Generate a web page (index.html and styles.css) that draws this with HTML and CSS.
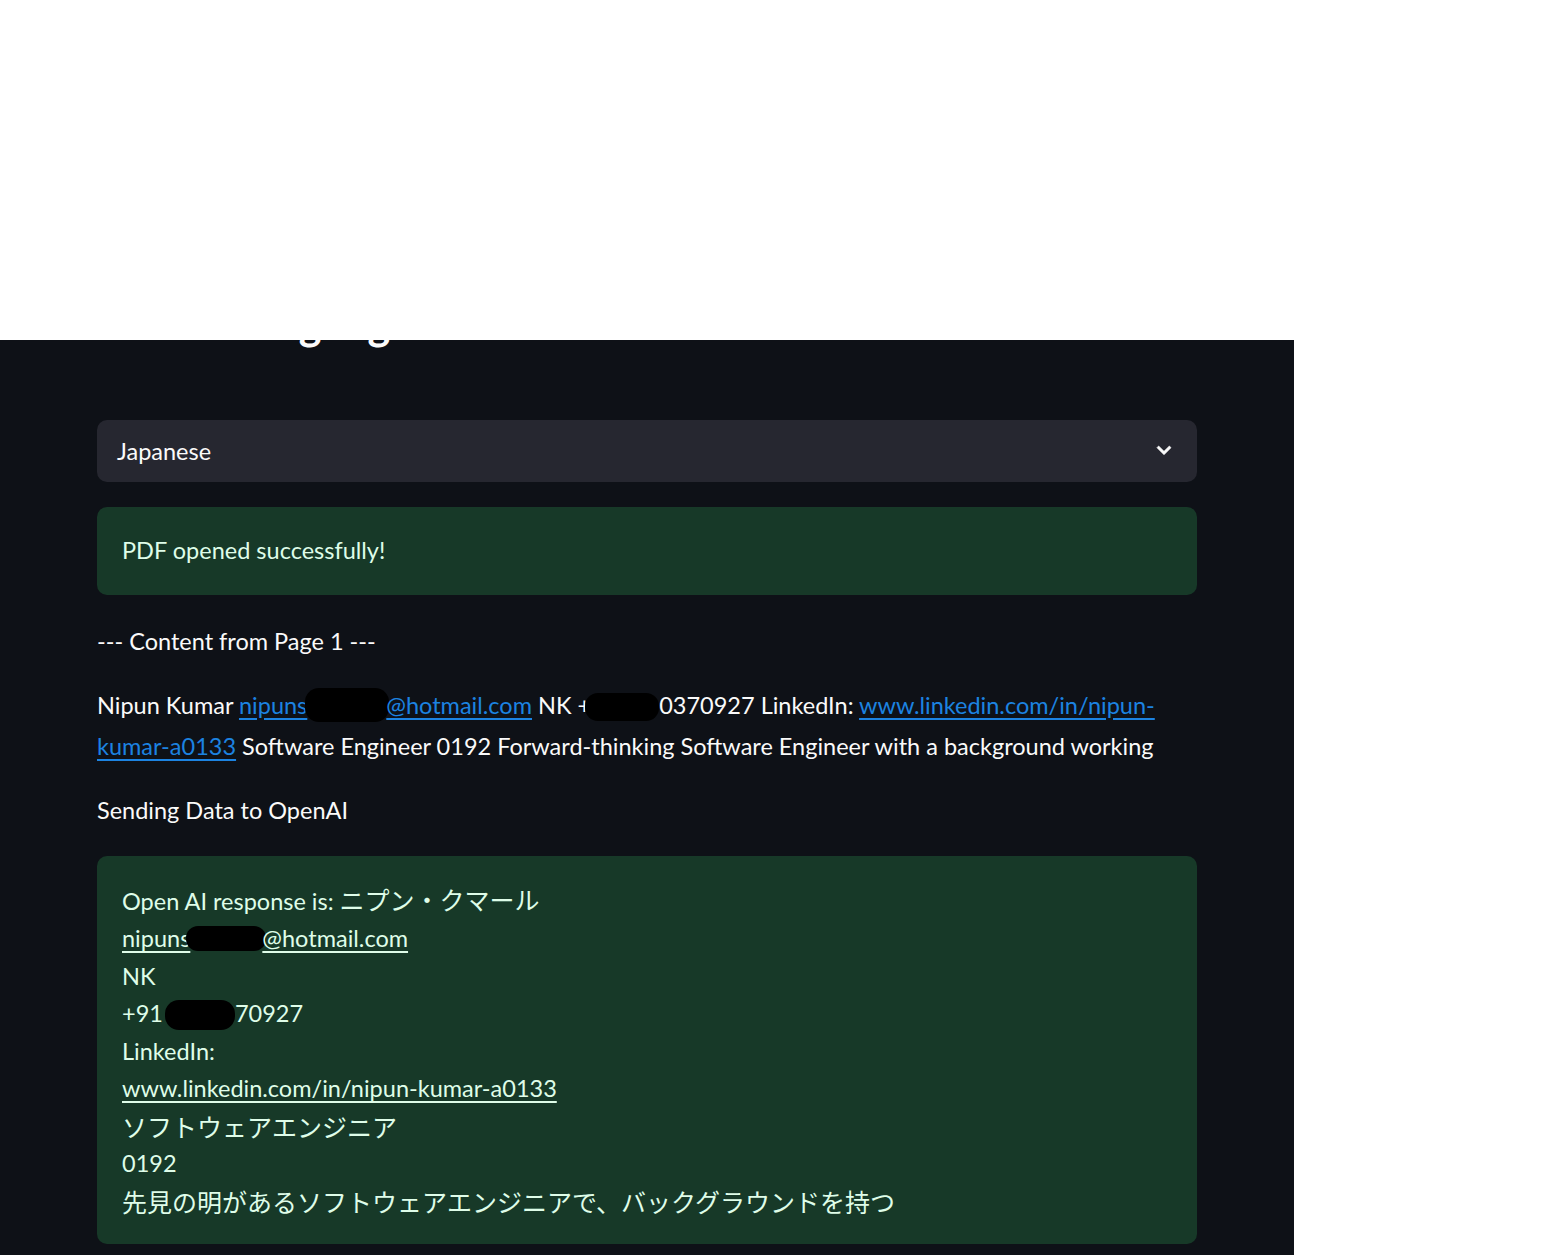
FILE: index.html
```html
<!DOCTYPE html>
<html lang="en">
<head>
<meta charset="utf-8">
<title>Translate PDF</title>
<link rel="stylesheet" href="styles.css">
</head>
<body>
<div class="blank"></div>
<div class="app">
  <div class="main">
    <h3 class="heading">Select Language</h3>
    <div class="select">
      <span class="select-value">Japanese</span>
      <svg class="chevron" viewBox="0 0 24 24" width="28" height="28"><path d="M7.41 8.59L12 13.17l4.59-4.58L18 10l-6 6-6-6 1.41-1.41z" fill="#fafafa" stroke="#fafafa" stroke-width="0.6"/></svg>
    </div>
    <div class="alert success">PDF opened successfully!</div>
    <p class="text first">--- Content from Page 1 ---</p>
    <p class="text para">Nipun Kumar <a href="#" class="link">nipuns<span class="blob b1"></span>@hotmail.com</a> NK +<span class="blob b2"></span>0370927 LinkedIn: <a href="#" class="link">www.linkedin.com/in/nipun-<br>kumar-a0133</a> Software Engineer 0192 Forward-thinking Software Engineer with a background working</p>
    <p class="text send">Sending Data to OpenAI</p>
    <div class="alert success response">
      <div>Open AI response is: <span class="jp">ニプン・クマール</span></div>
      <div><a href="#" class="rlink">nipuns<span class="blob b3"></span>@hotmail.com</a></div>
      <div>NK</div>
      <div>+91 <span class="blob b4"></span>70927</div>
      <div>LinkedIn:</div>
      <div><a href="#" class="rlink">www.linkedin.com/in/nipun-kumar-a0133</a></div>
      <div class="jp">ソフトウェアエンジニア</div>
      <div>0192</div>
      <div class="jp">先見の明があるソフトウェアエンジニアで、バックグラウンドを持つ</div>
    </div>
  </div>
</div>
</body>
</html>
```

FILE: styles.css
```css
html, body {
  margin: 0;
  padding: 0;
  background: #ffffff;
}

body {
  font-family: Lato, "Noto Sans", "Noto Sans CJK JP", sans-serif;
  color: #fafafa;
}

.blank {
  height: 340px;
  background: #ffffff;
}

.app {
  width: 1294px;
  height: 915px;
  background: #0e1117;
  overflow: hidden;
}

.main {
  width: 1100px;
  margin-left: 97px;
  display: flex;
  flex-direction: column;
}

.heading {
  margin: -41px 0 0 0;
  font-size: 43px;
  line-height: 49px;
  font-weight: 700;
  color: #fafafa;
  padding-left: 6px;
}

.select {
  margin-top: 72px;
  height: 62px;
  background: #262730;
  border-radius: 10px;
  display: flex;
  align-items: center;
  justify-content: space-between;
  padding: 0 19px 0 20px;
  font-size: 23.5px;
}

.select-value {
  color: #fafafa;
}

.chevron {
  display: block;
  margin-top: -3px;
}

.alert {
  border-radius: 10px;
  background: #173928;
  color: #dffde9;
  padding: 25px 25px;
  font-size: 23.5px;
  line-height: 37.5px;
}

.success {
  margin-top: 25px;
}

.text {
  margin: 0;
  font-size: 23.5px;
  line-height: 38px;
  color: #fafafa;
}

.first {
  margin-top: 27px;
}

.para {
  margin-top: 25px;
  line-height: 41px;
  white-space: nowrap;
}

.send {
  margin-top: 24px;
}

.response {
  margin-top: 27px;
  padding-bottom: 24px;
}

.link {
  color: #1c83e1;
  text-decoration: underline;
  text-underline-offset: 4px;
}

.rlink {
  color: #dffde9;
  text-decoration: underline;
  text-underline-offset: 4px;
}

.jp {
  font-family: "Noto Sans CJK JP", sans-serif;
  font-size: 25px;
  font-weight: 400;
}

.blob {
  display: inline-block;
  background: #000000;
  vertical-align: middle;
}

.b1 {
  width: 84px;
  height: 34px;
  border-radius: 14px;
  margin: -6px -3px 0 -2px;
}

.b2 {
  width: 74px;
  height: 28px;
  border-radius: 13px;
  margin: -2px 0 0 -6px;
}

.b3 {
  width: 80px;
  height: 25px;
  border-radius: 12px;
  margin: -6px -4px 0 -4px;
}

.b4 {
  width: 70px;
  height: 30px;
  border-radius: 14px;
  margin: -2px 0 0 -4px;
}
```
